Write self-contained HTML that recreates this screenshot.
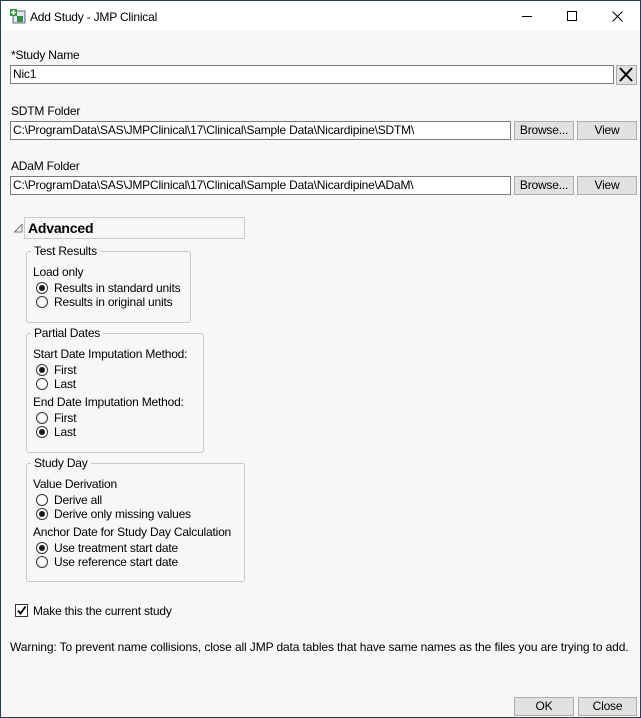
<!DOCTYPE html>
<html><head><meta charset="utf-8"><style>
*{margin:0;padding:0;box-sizing:border-box}
body{width:641px;height:718px;overflow:hidden;background:#f7f7f7;font-family:"Liberation Sans",sans-serif;font-size:12px;color:#000;letter-spacing:-0.2px;position:relative}
.win{position:absolute;left:0;top:0;width:641px;height:718px;border:1px solid #1e3f5f;border-top:none}
.title{position:absolute;left:0;top:0;width:641px;height:31px;background:#fff;border:1px solid #1e3f5f;border-bottom:none}
.a{position:absolute;white-space:nowrap;line-height:14px}
.inp{position:absolute;background:#fff;border:1px solid #7a7a7a;height:19px;padding-left:2px;line-height:17px;white-space:nowrap;overflow:hidden}
.btn{position:absolute;background:#e1e1e1;border:1px solid #adadad;height:19px;text-align:center;line-height:17px}
.grp{position:absolute;border:1px solid #c8c8c8;border-radius:3px}
.gt{position:absolute;background:#f7f7f7;padding:0 3px;line-height:14px;white-space:nowrap}
.r{position:absolute;width:12px;height:12px;border:1px solid #333;border-radius:50%;background:#fff}
.r.on::after{content:"";position:absolute;left:2px;top:2px;width:6px;height:6px;border-radius:50%;background:#1a1a1a}
</style></head><body>
<div class="win"></div>
<div class="title">
<svg style="position:absolute;left:8px;top:7px" width="17" height="17" viewBox="0 0 17 17"><rect x="4" y="3" width="12" height="12" fill="#dfe6ee" stroke="#5a6b7d"/><rect x="1" y="1" width="7" height="7" fill="#2e9a3a"/><path d="M4.5 2v5M2 4.5h5" stroke="#fff" stroke-width="1.5"/><rect x="8" y="8" width="6" height="6" fill="#3a8a4a"/></svg>
<div class="a" style="left:29px;top:9px;font-size:12px">Add Study - JMP Clinical</div>
<div style="position:absolute;left:521px;top:15px;width:10px;height:1px;background:#000"></div>
<div style="position:absolute;left:566px;top:10px;width:10px;height:10px;border:1px solid #000"></div>
<svg style="position:absolute;left:611px;top:10px" width="11" height="11"><path d="M0.5 0.5L10.5 10.5M10.5 0.5L0.5 10.5" stroke="#000"/></svg>
</div>

<div class="a" style="left:11px;top:48px">*Study Name</div>
<div class="inp" style="left:10px;top:65px;width:604px">Nic1</div>
<div class="btn" style="left:616px;top:65px;width:21px;height:20px;padding:0"><svg width="19" height="18"><path d="M3 2L15 15M15 2L3 15" stroke="#000" stroke-width="2"/></svg></div>

<div class="a" style="left:11px;top:104px">SDTM Folder</div>
<div class="inp" style="left:10px;top:121px;width:501px">C:\ProgramData\SAS\JMPClinical\17\Clinical\Sample Data\Nicardipine\SDTM\</div>
<div class="btn" style="left:514px;top:121px;width:60px">Browse...</div>
<div class="btn" style="left:577px;top:121px;width:60px">View</div>

<div class="a" style="left:11px;top:159px">ADaM Folder</div>
<div class="inp" style="left:10px;top:176px;width:501px">C:\ProgramData\SAS\JMPClinical\17\Clinical\Sample Data\Nicardipine\ADaM\</div>
<div class="btn" style="left:514px;top:176px;width:60px">Browse...</div>
<div class="btn" style="left:577px;top:176px;width:60px">View</div>

<svg style="position:absolute;left:14px;top:224px" width="9" height="9"><path d="M8 0.5L8 8H0.5Z" fill="none" stroke="#777"/></svg>
<div style="position:absolute;left:24px;top:217px;width:221px;height:22px;border:1px solid #ccc"></div>
<div class="a" style="left:28px;top:220px;font-size:14px;font-weight:bold;line-height:16px">Advanced</div>

<div class="grp" style="left:26px;top:251px;width:165px;height:72px"></div>
<div class="gt" style="left:31px;top:244px">Test Results</div>
<div class="a" style="left:33px;top:265px">Load only</div>
<div class="r on" style="left:36px;top:282px"></div><div class="a" style="left:54px;top:281px">Results in standard units</div>
<div class="r" style="left:36px;top:296px"></div><div class="a" style="left:54px;top:295px">Results in original units</div>

<div class="grp" style="left:26px;top:333px;width:178px;height:120px"></div>
<div class="gt" style="left:31px;top:326px">Partial Dates</div>
<div class="a" style="left:33px;top:347px">Start Date Imputation Method:</div>
<div class="r on" style="left:36px;top:364px"></div><div class="a" style="left:54px;top:363px">First</div>
<div class="r" style="left:36px;top:378px"></div><div class="a" style="left:54px;top:377px">Last</div>
<div class="a" style="left:33px;top:395px">End Date Imputation Method:</div>
<div class="r" style="left:36px;top:412px"></div><div class="a" style="left:54px;top:411px">First</div>
<div class="r on" style="left:36px;top:426px"></div><div class="a" style="left:54px;top:425px">Last</div>

<div class="grp" style="left:26px;top:463px;width:219px;height:119px"></div>
<div class="gt" style="left:31px;top:456px">Study Day</div>
<div class="a" style="left:33px;top:477px">Value Derivation</div>
<div class="r" style="left:36px;top:494px"></div><div class="a" style="left:54px;top:493px">Derive all</div>
<div class="r on" style="left:36px;top:508px"></div><div class="a" style="left:54px;top:507px">Derive only missing values</div>
<div class="a" style="left:33px;top:525px">Anchor Date for Study Day Calculation</div>
<div class="r on" style="left:36px;top:542px"></div><div class="a" style="left:54px;top:541px">Use treatment start date</div>
<div class="r" style="left:36px;top:556px"></div><div class="a" style="left:54px;top:555px">Use reference start date</div>

<div style="position:absolute;left:15px;top:604px;width:13px;height:13px;border:1px solid #333;background:#fff"><svg width="11" height="11" style="position:absolute;left:0;top:0"><path d="M2 5.5L4.5 8.5L9.5 1.5" fill="none" stroke="#000" stroke-width="1.8"/></svg></div>
<div class="a" style="left:33px;top:604px">Make this the current study</div>

<div class="a" style="left:10px;top:640px;font-size:12px;letter-spacing:-0.12px">Warning: To prevent name collisions, close all JMP data tables that have same names as the files you are trying to add.</div>

<div class="btn" style="left:514px;top:697px;width:60px">OK</div>
<div class="btn" style="left:578px;top:697px;width:59px">Close</div>
</body></html>
